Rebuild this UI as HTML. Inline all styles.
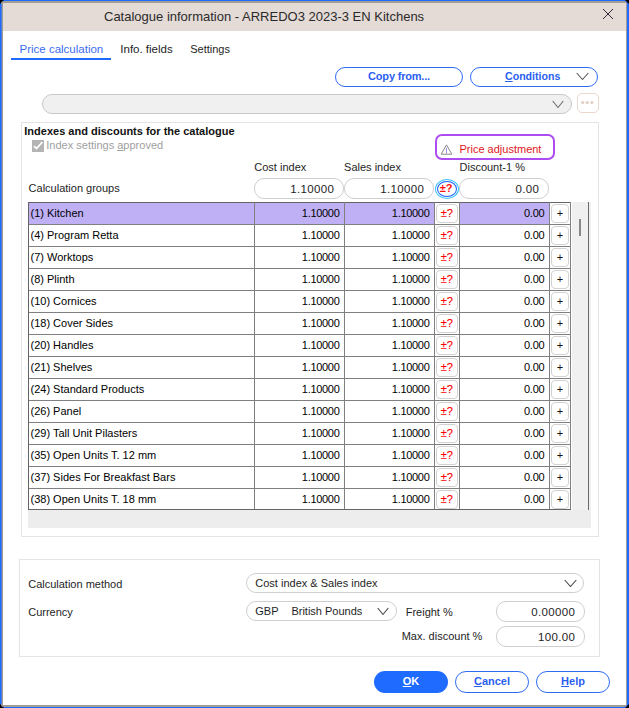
<!DOCTYPE html>
<html><head><meta charset="utf-8"><title>Catalogue information</title>
<style>
html,body{margin:0;padding:0;width:629px;height:708px;overflow:hidden;background:#000;}
body{position:relative;font-family:"Liberation Sans",sans-serif;}
.r{position:absolute;}
.t{position:absolute;white-space:nowrap;}
u{text-decoration:underline;text-underline-offset:1px;}
</style></head><body>
<div class="r" style="left:0px;top:0px;width:629px;height:708px;background:#1f6bff;clip-path:polygon(4px 0,625px 0,629px 4px,629px 704px,625px 708px,4px 708px,0 704px,0 4px);"></div>
<div class="r" style="left:1px;top:1px;width:626px;height:706px;background:#a19c96;border-radius:3px;"></div>
<div class="r" style="left:1px;top:4px;width:1px;height:700px;background:#4f7fd8;"></div>
<div class="r" style="left:3px;top:3px;width:623px;height:702px;background:#fff;"></div>
<div class="r" style="left:3px;top:3px;width:623px;height:28px;background:#e4dad6;"></div>
<div class="t" style="top:8.50px;font-size:13px;line-height:16px;color:#2a2a2a;left:104px;">Catalogue information - ARREDO3 2023-3 EN Kitchens</div>
<svg class="r" style="left:602px;top:8px" width="12" height="12" viewBox="0 0 12 12"><path d="M1 1 L11 11 M11 1 L1 11" stroke="#2a2030" stroke-width="0.95" fill="none"/></svg>
<div class="t" style="top:42.32px;font-size:11.5px;line-height:14px;color:#3b6cf0;left:19.5px;">Price calculation</div>
<div class="t" style="top:42.32px;font-size:11.5px;line-height:14px;color:#1e1e1e;left:120.3px;">Info. fields</div>
<div class="t" style="top:42.49px;font-size:11px;line-height:14px;color:#1e1e1e;left:190.2px;">Settings</div>
<div class="r" style="left:11px;top:58px;width:100px;height:2px;background:#1f6bff;"></div>
<div class="r" style="left:335px;top:67px;width:128px;height:20px;border:1px solid #2f6cf5;border-radius:10px;box-sizing:border-box;"></div>
<div class="t" style="top:69.19px;font-size:11px;line-height:14px;color:#2a5ff0;font-weight:700;letter-spacing:-0.2px;left:249px;width:300px;text-align:center;">Copy from...</div>
<div class="r" style="left:470px;top:67px;width:128px;height:20px;border:1px solid #2f6cf5;border-radius:10px;box-sizing:border-box;"></div>
<div class="t" style="top:69.83px;font-size:10.6px;line-height:13px;color:#2a5ff0;font-weight:700;left:505px;"><u>C</u>onditions</div>
<svg class="r" style="left:576px;top:72px" width="13" height="9" viewBox="0 0 13 9"><path d="M0.7 1 L6.5 7.5 L12.3 1" fill="none" stroke="#555" stroke-width="1.05"/></svg>
<div class="r" style="left:42px;top:94px;width:530px;height:20px;background:#f0f0f0;border:1px solid #c9c9c9;border-radius:10px;box-sizing:border-box;"></div>
<svg class="r" style="left:552px;top:100px" width="12" height="9" viewBox="0 0 12 9"><path d="M0.7 1 L6.0 7.5 L11.3 1" fill="none" stroke="#666" stroke-width="1.05"/></svg>
<div class="r" style="left:577px;top:93px;width:22px;height:20px;border:1px solid #ead8cc;border-radius:5px;box-sizing:border-box;"></div>
<svg class="r" style="left:577px;top:93px" width="22" height="20"><circle cx="5.7" cy="9.5" r="1.6" fill="#dfcfc4"/><circle cx="10.2" cy="9.5" r="1.6" fill="#dfcfc4"/><circle cx="14.9" cy="9.5" r="1.6" fill="#dfcfc4"/></svg>
<div class="r" style="left:21px;top:122px;width:578px;height:415px;border:1px solid #e4e4e4;box-sizing:border-box;"></div>
<div class="t" style="top:124.19px;font-size:11px;line-height:14px;color:#111;font-weight:700;left:24.3px;">Indexes and discounts for the catalogue</div>
<div class="r" style="left:32px;top:140px;width:12px;height:12px;background:#b4b4b4;"></div>
<svg class="r" style="left:32px;top:140px" width="12" height="12"><path d="M1.9 6.1 L4.5 8.5 L10.4 2" stroke="#fff" stroke-width="1.8" fill="none"/></svg>
<div class="t" style="top:138.19px;font-size:11px;line-height:14px;color:#a0a0a0;left:46.3px;">Index settings <u>a</u>pproved</div>
<div class="r" style="left:435px;top:134px;width:120px;height:26px;border:2px solid #ad4cf0;border-radius:7px;box-sizing:border-box;"></div>
<svg class="r" style="left:440px;top:144px" width="13" height="12"><path d="M6.5 0.9 L11.8 10.2 L1.2 10.2 Z" stroke="#7a7a7a" stroke-width="0.9" fill="none"/><path d="M6.5 3.8 L6.5 9.6" stroke="#8a7ce0" stroke-width="0.8"/></svg>
<div class="t" style="top:141.89px;font-size:11px;line-height:14px;color:#e0151b;left:459.5px;">Price adjustment</div>
<div class="t" style="top:160.19px;font-size:11px;line-height:14px;color:#1e1e1e;left:254.3px;">Cost index</div>
<div class="t" style="top:160.19px;font-size:11px;line-height:14px;color:#1e1e1e;left:344.1px;">Sales index</div>
<div class="t" style="top:159.89px;font-size:11px;line-height:14px;color:#1e1e1e;left:459.5px;">Discount-1 %</div>
<div class="t" style="top:180.99px;font-size:11px;line-height:14px;color:#1e1e1e;left:28.6px;">Calculation groups</div>
<div class="r" style="left:254px;top:178px;width:90px;height:21px;border:1px solid #cfcfcf;border-radius:10px;box-sizing:border-box;background:#fff;"></div>
<div class="t" style="top:182.22px;font-size:11.5px;line-height:14px;color:#1e1e1e;letter-spacing:0.35px;right:294.65px;">1.10000</div>
<div class="r" style="left:344px;top:178px;width:90px;height:21px;border:1px solid #cfcfcf;border-radius:10px;box-sizing:border-box;background:#fff;"></div>
<div class="t" style="top:182.22px;font-size:11.5px;line-height:14px;color:#1e1e1e;letter-spacing:0.35px;right:204.64999999999998px;">1.10000</div>
<div class="r" style="left:459px;top:178px;width:90px;height:21px;border:1px solid #cfcfcf;border-radius:10px;box-sizing:border-box;background:#fff;"></div>
<div class="t" style="top:182.22px;font-size:11.5px;line-height:14px;color:#1e1e1e;letter-spacing:0.35px;right:89.64999999999998px;">0.00</div>
<div class="r" style="left:435px;top:179px;width:24px;height:20px;border:1px solid #35c3ff;border-radius:50%;box-sizing:border-box;background:#fff;"></div>
<div class="r" style="left:437px;top:181px;width:20px;height:16px;border:1.3px solid #1a5cff;border-radius:50%;box-sizing:border-box;"></div>
<div class="t" style="top:180.89px;font-size:11px;line-height:14px;color:#ff1010;font-weight:700;left:296.2px;width:300px;text-align:center;">±?</div>
<div class="r" style="left:28px;top:510px;width:563px;height:18px;background:#ededed;"></div>
<div class="r" style="left:572px;top:202px;width:19px;height:308px;background:#f0f0f0;"></div>
<div class="r" style="left:588px;top:202px;width:1px;height:308px;background:#6a6a6a;"></div>
<div class="r" style="left:579px;top:219px;width:2px;height:17px;background:#888;"></div>
<div class="r" style="left:29px;top:203px;width:225px;height:21px;background:#bfb0f5;"></div>
<div class="r" style="left:255px;top:203px;width:89px;height:21px;background:#bfb0f5;"></div>
<div class="r" style="left:345px;top:203px;width:89px;height:21px;background:#bfb0f5;"></div>
<div class="r" style="left:460px;top:203px;width:89px;height:21px;background:#bfb0f5;"></div>
<div class="t" style="top:206.19px;font-size:11px;line-height:14px;color:#000;left:30.5px;">(1) Kitchen</div>
<div class="t" style="top:206.19px;font-size:11px;line-height:14px;color:#000;letter-spacing:-0.3px;right:289.5px;">1.10000</div>
<div class="t" style="top:206.19px;font-size:11px;line-height:14px;color:#000;letter-spacing:-0.3px;right:199.5px;">1.10000</div>
<div class="t" style="top:206.19px;font-size:11px;line-height:14px;color:#000;letter-spacing:-0.2px;right:84.5px;">0.00</div>
<div class="r" style="left:436px;top:204px;width:22px;height:19px;border:1px solid #d2d2d2;border-radius:4px;box-sizing:border-box;background:#fff;"></div>
<div class="t" style="top:206.19px;font-size:11px;line-height:14px;color:#ff0000;left:296.8px;width:300px;text-align:center;-webkit-text-stroke:0.12px #ff0000;">±?</div>
<div class="r" style="left:551px;top:204px;width:18px;height:19px;border:1px solid #d2d2d2;border-radius:4px;box-sizing:border-box;background:#fff;"></div>
<div class="t" style="top:205.69px;font-size:11px;line-height:14px;color:#111;left:410px;width:300px;text-align:center;">+</div>
<div class="r" style="left:29px;top:225px;width:225px;height:21px;background:#fff;"></div>
<div class="r" style="left:255px;top:225px;width:89px;height:21px;background:#fff;"></div>
<div class="r" style="left:345px;top:225px;width:89px;height:21px;background:#fff;"></div>
<div class="r" style="left:460px;top:225px;width:89px;height:21px;background:#fff;"></div>
<div class="t" style="top:228.19px;font-size:11px;line-height:14px;color:#000;left:30.5px;">(4) Program Retta</div>
<div class="t" style="top:228.19px;font-size:11px;line-height:14px;color:#000;letter-spacing:-0.3px;right:289.5px;">1.10000</div>
<div class="t" style="top:228.19px;font-size:11px;line-height:14px;color:#000;letter-spacing:-0.3px;right:199.5px;">1.10000</div>
<div class="t" style="top:228.19px;font-size:11px;line-height:14px;color:#000;letter-spacing:-0.2px;right:84.5px;">0.00</div>
<div class="r" style="left:436px;top:226px;width:22px;height:19px;border:1px solid #d2d2d2;border-radius:4px;box-sizing:border-box;background:#fff;"></div>
<div class="t" style="top:228.19px;font-size:11px;line-height:14px;color:#ff0000;left:296.8px;width:300px;text-align:center;-webkit-text-stroke:0.12px #ff0000;">±?</div>
<div class="r" style="left:551px;top:226px;width:18px;height:19px;border:1px solid #d2d2d2;border-radius:4px;box-sizing:border-box;background:#fff;"></div>
<div class="t" style="top:227.69px;font-size:11px;line-height:14px;color:#111;left:410px;width:300px;text-align:center;">+</div>
<div class="r" style="left:29px;top:247px;width:225px;height:21px;background:#fff;"></div>
<div class="r" style="left:255px;top:247px;width:89px;height:21px;background:#fff;"></div>
<div class="r" style="left:345px;top:247px;width:89px;height:21px;background:#fff;"></div>
<div class="r" style="left:460px;top:247px;width:89px;height:21px;background:#fff;"></div>
<div class="t" style="top:250.19px;font-size:11px;line-height:14px;color:#000;left:30.5px;">(7) Worktops</div>
<div class="t" style="top:250.19px;font-size:11px;line-height:14px;color:#000;letter-spacing:-0.3px;right:289.5px;">1.10000</div>
<div class="t" style="top:250.19px;font-size:11px;line-height:14px;color:#000;letter-spacing:-0.3px;right:199.5px;">1.10000</div>
<div class="t" style="top:250.19px;font-size:11px;line-height:14px;color:#000;letter-spacing:-0.2px;right:84.5px;">0.00</div>
<div class="r" style="left:436px;top:248px;width:22px;height:19px;border:1px solid #d2d2d2;border-radius:4px;box-sizing:border-box;background:#fff;"></div>
<div class="t" style="top:250.19px;font-size:11px;line-height:14px;color:#ff0000;left:296.8px;width:300px;text-align:center;-webkit-text-stroke:0.12px #ff0000;">±?</div>
<div class="r" style="left:551px;top:248px;width:18px;height:19px;border:1px solid #d2d2d2;border-radius:4px;box-sizing:border-box;background:#fff;"></div>
<div class="t" style="top:249.69px;font-size:11px;line-height:14px;color:#111;left:410px;width:300px;text-align:center;">+</div>
<div class="r" style="left:29px;top:269px;width:225px;height:21px;background:#fff;"></div>
<div class="r" style="left:255px;top:269px;width:89px;height:21px;background:#fff;"></div>
<div class="r" style="left:345px;top:269px;width:89px;height:21px;background:#fff;"></div>
<div class="r" style="left:460px;top:269px;width:89px;height:21px;background:#fff;"></div>
<div class="t" style="top:272.19px;font-size:11px;line-height:14px;color:#000;left:30.5px;">(8) Plinth</div>
<div class="t" style="top:272.19px;font-size:11px;line-height:14px;color:#000;letter-spacing:-0.3px;right:289.5px;">1.10000</div>
<div class="t" style="top:272.19px;font-size:11px;line-height:14px;color:#000;letter-spacing:-0.3px;right:199.5px;">1.10000</div>
<div class="t" style="top:272.19px;font-size:11px;line-height:14px;color:#000;letter-spacing:-0.2px;right:84.5px;">0.00</div>
<div class="r" style="left:436px;top:270px;width:22px;height:19px;border:1px solid #d2d2d2;border-radius:4px;box-sizing:border-box;background:#fff;"></div>
<div class="t" style="top:272.19px;font-size:11px;line-height:14px;color:#ff0000;left:296.8px;width:300px;text-align:center;-webkit-text-stroke:0.12px #ff0000;">±?</div>
<div class="r" style="left:551px;top:270px;width:18px;height:19px;border:1px solid #d2d2d2;border-radius:4px;box-sizing:border-box;background:#fff;"></div>
<div class="t" style="top:271.69px;font-size:11px;line-height:14px;color:#111;left:410px;width:300px;text-align:center;">+</div>
<div class="r" style="left:29px;top:291px;width:225px;height:21px;background:#fff;"></div>
<div class="r" style="left:255px;top:291px;width:89px;height:21px;background:#fff;"></div>
<div class="r" style="left:345px;top:291px;width:89px;height:21px;background:#fff;"></div>
<div class="r" style="left:460px;top:291px;width:89px;height:21px;background:#fff;"></div>
<div class="t" style="top:294.19px;font-size:11px;line-height:14px;color:#000;left:30.5px;">(10) Cornices</div>
<div class="t" style="top:294.19px;font-size:11px;line-height:14px;color:#000;letter-spacing:-0.3px;right:289.5px;">1.10000</div>
<div class="t" style="top:294.19px;font-size:11px;line-height:14px;color:#000;letter-spacing:-0.3px;right:199.5px;">1.10000</div>
<div class="t" style="top:294.19px;font-size:11px;line-height:14px;color:#000;letter-spacing:-0.2px;right:84.5px;">0.00</div>
<div class="r" style="left:436px;top:292px;width:22px;height:19px;border:1px solid #d2d2d2;border-radius:4px;box-sizing:border-box;background:#fff;"></div>
<div class="t" style="top:294.19px;font-size:11px;line-height:14px;color:#ff0000;left:296.8px;width:300px;text-align:center;-webkit-text-stroke:0.12px #ff0000;">±?</div>
<div class="r" style="left:551px;top:292px;width:18px;height:19px;border:1px solid #d2d2d2;border-radius:4px;box-sizing:border-box;background:#fff;"></div>
<div class="t" style="top:293.69px;font-size:11px;line-height:14px;color:#111;left:410px;width:300px;text-align:center;">+</div>
<div class="r" style="left:29px;top:313px;width:225px;height:21px;background:#fff;"></div>
<div class="r" style="left:255px;top:313px;width:89px;height:21px;background:#fff;"></div>
<div class="r" style="left:345px;top:313px;width:89px;height:21px;background:#fff;"></div>
<div class="r" style="left:460px;top:313px;width:89px;height:21px;background:#fff;"></div>
<div class="t" style="top:316.19px;font-size:11px;line-height:14px;color:#000;left:30.5px;">(18) Cover Sides</div>
<div class="t" style="top:316.19px;font-size:11px;line-height:14px;color:#000;letter-spacing:-0.3px;right:289.5px;">1.10000</div>
<div class="t" style="top:316.19px;font-size:11px;line-height:14px;color:#000;letter-spacing:-0.3px;right:199.5px;">1.10000</div>
<div class="t" style="top:316.19px;font-size:11px;line-height:14px;color:#000;letter-spacing:-0.2px;right:84.5px;">0.00</div>
<div class="r" style="left:436px;top:314px;width:22px;height:19px;border:1px solid #d2d2d2;border-radius:4px;box-sizing:border-box;background:#fff;"></div>
<div class="t" style="top:316.19px;font-size:11px;line-height:14px;color:#ff0000;left:296.8px;width:300px;text-align:center;-webkit-text-stroke:0.12px #ff0000;">±?</div>
<div class="r" style="left:551px;top:314px;width:18px;height:19px;border:1px solid #d2d2d2;border-radius:4px;box-sizing:border-box;background:#fff;"></div>
<div class="t" style="top:315.69px;font-size:11px;line-height:14px;color:#111;left:410px;width:300px;text-align:center;">+</div>
<div class="r" style="left:29px;top:335px;width:225px;height:21px;background:#fff;"></div>
<div class="r" style="left:255px;top:335px;width:89px;height:21px;background:#fff;"></div>
<div class="r" style="left:345px;top:335px;width:89px;height:21px;background:#fff;"></div>
<div class="r" style="left:460px;top:335px;width:89px;height:21px;background:#fff;"></div>
<div class="t" style="top:338.19px;font-size:11px;line-height:14px;color:#000;left:30.5px;">(20) Handles</div>
<div class="t" style="top:338.19px;font-size:11px;line-height:14px;color:#000;letter-spacing:-0.3px;right:289.5px;">1.10000</div>
<div class="t" style="top:338.19px;font-size:11px;line-height:14px;color:#000;letter-spacing:-0.3px;right:199.5px;">1.10000</div>
<div class="t" style="top:338.19px;font-size:11px;line-height:14px;color:#000;letter-spacing:-0.2px;right:84.5px;">0.00</div>
<div class="r" style="left:436px;top:336px;width:22px;height:19px;border:1px solid #d2d2d2;border-radius:4px;box-sizing:border-box;background:#fff;"></div>
<div class="t" style="top:338.19px;font-size:11px;line-height:14px;color:#ff0000;left:296.8px;width:300px;text-align:center;-webkit-text-stroke:0.12px #ff0000;">±?</div>
<div class="r" style="left:551px;top:336px;width:18px;height:19px;border:1px solid #d2d2d2;border-radius:4px;box-sizing:border-box;background:#fff;"></div>
<div class="t" style="top:337.69px;font-size:11px;line-height:14px;color:#111;left:410px;width:300px;text-align:center;">+</div>
<div class="r" style="left:29px;top:357px;width:225px;height:21px;background:#fff;"></div>
<div class="r" style="left:255px;top:357px;width:89px;height:21px;background:#fff;"></div>
<div class="r" style="left:345px;top:357px;width:89px;height:21px;background:#fff;"></div>
<div class="r" style="left:460px;top:357px;width:89px;height:21px;background:#fff;"></div>
<div class="t" style="top:360.19px;font-size:11px;line-height:14px;color:#000;left:30.5px;">(21) Shelves</div>
<div class="t" style="top:360.19px;font-size:11px;line-height:14px;color:#000;letter-spacing:-0.3px;right:289.5px;">1.10000</div>
<div class="t" style="top:360.19px;font-size:11px;line-height:14px;color:#000;letter-spacing:-0.3px;right:199.5px;">1.10000</div>
<div class="t" style="top:360.19px;font-size:11px;line-height:14px;color:#000;letter-spacing:-0.2px;right:84.5px;">0.00</div>
<div class="r" style="left:436px;top:358px;width:22px;height:19px;border:1px solid #d2d2d2;border-radius:4px;box-sizing:border-box;background:#fff;"></div>
<div class="t" style="top:360.19px;font-size:11px;line-height:14px;color:#ff0000;left:296.8px;width:300px;text-align:center;-webkit-text-stroke:0.12px #ff0000;">±?</div>
<div class="r" style="left:551px;top:358px;width:18px;height:19px;border:1px solid #d2d2d2;border-radius:4px;box-sizing:border-box;background:#fff;"></div>
<div class="t" style="top:359.69px;font-size:11px;line-height:14px;color:#111;left:410px;width:300px;text-align:center;">+</div>
<div class="r" style="left:29px;top:379px;width:225px;height:21px;background:#fff;"></div>
<div class="r" style="left:255px;top:379px;width:89px;height:21px;background:#fff;"></div>
<div class="r" style="left:345px;top:379px;width:89px;height:21px;background:#fff;"></div>
<div class="r" style="left:460px;top:379px;width:89px;height:21px;background:#fff;"></div>
<div class="t" style="top:382.19px;font-size:11px;line-height:14px;color:#000;left:30.5px;">(24) Standard Products</div>
<div class="t" style="top:382.19px;font-size:11px;line-height:14px;color:#000;letter-spacing:-0.3px;right:289.5px;">1.10000</div>
<div class="t" style="top:382.19px;font-size:11px;line-height:14px;color:#000;letter-spacing:-0.3px;right:199.5px;">1.10000</div>
<div class="t" style="top:382.19px;font-size:11px;line-height:14px;color:#000;letter-spacing:-0.2px;right:84.5px;">0.00</div>
<div class="r" style="left:436px;top:380px;width:22px;height:19px;border:1px solid #d2d2d2;border-radius:4px;box-sizing:border-box;background:#fff;"></div>
<div class="t" style="top:382.19px;font-size:11px;line-height:14px;color:#ff0000;left:296.8px;width:300px;text-align:center;-webkit-text-stroke:0.12px #ff0000;">±?</div>
<div class="r" style="left:551px;top:380px;width:18px;height:19px;border:1px solid #d2d2d2;border-radius:4px;box-sizing:border-box;background:#fff;"></div>
<div class="t" style="top:381.69px;font-size:11px;line-height:14px;color:#111;left:410px;width:300px;text-align:center;">+</div>
<div class="r" style="left:29px;top:401px;width:225px;height:21px;background:#fff;"></div>
<div class="r" style="left:255px;top:401px;width:89px;height:21px;background:#fff;"></div>
<div class="r" style="left:345px;top:401px;width:89px;height:21px;background:#fff;"></div>
<div class="r" style="left:460px;top:401px;width:89px;height:21px;background:#fff;"></div>
<div class="t" style="top:404.19px;font-size:11px;line-height:14px;color:#000;left:30.5px;">(26) Panel</div>
<div class="t" style="top:404.19px;font-size:11px;line-height:14px;color:#000;letter-spacing:-0.3px;right:289.5px;">1.10000</div>
<div class="t" style="top:404.19px;font-size:11px;line-height:14px;color:#000;letter-spacing:-0.3px;right:199.5px;">1.10000</div>
<div class="t" style="top:404.19px;font-size:11px;line-height:14px;color:#000;letter-spacing:-0.2px;right:84.5px;">0.00</div>
<div class="r" style="left:436px;top:402px;width:22px;height:19px;border:1px solid #d2d2d2;border-radius:4px;box-sizing:border-box;background:#fff;"></div>
<div class="t" style="top:404.19px;font-size:11px;line-height:14px;color:#ff0000;left:296.8px;width:300px;text-align:center;-webkit-text-stroke:0.12px #ff0000;">±?</div>
<div class="r" style="left:551px;top:402px;width:18px;height:19px;border:1px solid #d2d2d2;border-radius:4px;box-sizing:border-box;background:#fff;"></div>
<div class="t" style="top:403.69px;font-size:11px;line-height:14px;color:#111;left:410px;width:300px;text-align:center;">+</div>
<div class="r" style="left:29px;top:423px;width:225px;height:21px;background:#fff;"></div>
<div class="r" style="left:255px;top:423px;width:89px;height:21px;background:#fff;"></div>
<div class="r" style="left:345px;top:423px;width:89px;height:21px;background:#fff;"></div>
<div class="r" style="left:460px;top:423px;width:89px;height:21px;background:#fff;"></div>
<div class="t" style="top:426.19px;font-size:11px;line-height:14px;color:#000;left:30.5px;">(29) Tall Unit Pilasters</div>
<div class="t" style="top:426.19px;font-size:11px;line-height:14px;color:#000;letter-spacing:-0.3px;right:289.5px;">1.10000</div>
<div class="t" style="top:426.19px;font-size:11px;line-height:14px;color:#000;letter-spacing:-0.3px;right:199.5px;">1.10000</div>
<div class="t" style="top:426.19px;font-size:11px;line-height:14px;color:#000;letter-spacing:-0.2px;right:84.5px;">0.00</div>
<div class="r" style="left:436px;top:424px;width:22px;height:19px;border:1px solid #d2d2d2;border-radius:4px;box-sizing:border-box;background:#fff;"></div>
<div class="t" style="top:426.19px;font-size:11px;line-height:14px;color:#ff0000;left:296.8px;width:300px;text-align:center;-webkit-text-stroke:0.12px #ff0000;">±?</div>
<div class="r" style="left:551px;top:424px;width:18px;height:19px;border:1px solid #d2d2d2;border-radius:4px;box-sizing:border-box;background:#fff;"></div>
<div class="t" style="top:425.69px;font-size:11px;line-height:14px;color:#111;left:410px;width:300px;text-align:center;">+</div>
<div class="r" style="left:29px;top:445px;width:225px;height:21px;background:#fff;"></div>
<div class="r" style="left:255px;top:445px;width:89px;height:21px;background:#fff;"></div>
<div class="r" style="left:345px;top:445px;width:89px;height:21px;background:#fff;"></div>
<div class="r" style="left:460px;top:445px;width:89px;height:21px;background:#fff;"></div>
<div class="t" style="top:448.19px;font-size:11px;line-height:14px;color:#000;left:30.5px;">(35) Open Units T. 12 mm</div>
<div class="t" style="top:448.19px;font-size:11px;line-height:14px;color:#000;letter-spacing:-0.3px;right:289.5px;">1.10000</div>
<div class="t" style="top:448.19px;font-size:11px;line-height:14px;color:#000;letter-spacing:-0.3px;right:199.5px;">1.10000</div>
<div class="t" style="top:448.19px;font-size:11px;line-height:14px;color:#000;letter-spacing:-0.2px;right:84.5px;">0.00</div>
<div class="r" style="left:436px;top:446px;width:22px;height:19px;border:1px solid #d2d2d2;border-radius:4px;box-sizing:border-box;background:#fff;"></div>
<div class="t" style="top:448.19px;font-size:11px;line-height:14px;color:#ff0000;left:296.8px;width:300px;text-align:center;-webkit-text-stroke:0.12px #ff0000;">±?</div>
<div class="r" style="left:551px;top:446px;width:18px;height:19px;border:1px solid #d2d2d2;border-radius:4px;box-sizing:border-box;background:#fff;"></div>
<div class="t" style="top:447.69px;font-size:11px;line-height:14px;color:#111;left:410px;width:300px;text-align:center;">+</div>
<div class="r" style="left:29px;top:467px;width:225px;height:21px;background:#fff;"></div>
<div class="r" style="left:255px;top:467px;width:89px;height:21px;background:#fff;"></div>
<div class="r" style="left:345px;top:467px;width:89px;height:21px;background:#fff;"></div>
<div class="r" style="left:460px;top:467px;width:89px;height:21px;background:#fff;"></div>
<div class="t" style="top:470.19px;font-size:11px;line-height:14px;color:#000;left:30.5px;">(37) Sides For Breakfast Bars</div>
<div class="t" style="top:470.19px;font-size:11px;line-height:14px;color:#000;letter-spacing:-0.3px;right:289.5px;">1.10000</div>
<div class="t" style="top:470.19px;font-size:11px;line-height:14px;color:#000;letter-spacing:-0.3px;right:199.5px;">1.10000</div>
<div class="t" style="top:470.19px;font-size:11px;line-height:14px;color:#000;letter-spacing:-0.2px;right:84.5px;">0.00</div>
<div class="r" style="left:436px;top:468px;width:22px;height:19px;border:1px solid #d2d2d2;border-radius:4px;box-sizing:border-box;background:#fff;"></div>
<div class="t" style="top:470.19px;font-size:11px;line-height:14px;color:#ff0000;left:296.8px;width:300px;text-align:center;-webkit-text-stroke:0.12px #ff0000;">±?</div>
<div class="r" style="left:551px;top:468px;width:18px;height:19px;border:1px solid #d2d2d2;border-radius:4px;box-sizing:border-box;background:#fff;"></div>
<div class="t" style="top:469.69px;font-size:11px;line-height:14px;color:#111;left:410px;width:300px;text-align:center;">+</div>
<div class="r" style="left:29px;top:489px;width:225px;height:21px;background:#fff;"></div>
<div class="r" style="left:255px;top:489px;width:89px;height:21px;background:#fff;"></div>
<div class="r" style="left:345px;top:489px;width:89px;height:21px;background:#fff;"></div>
<div class="r" style="left:460px;top:489px;width:89px;height:21px;background:#fff;"></div>
<div class="t" style="top:492.19px;font-size:11px;line-height:14px;color:#000;left:30.5px;">(38) Open Units T. 18 mm</div>
<div class="t" style="top:492.19px;font-size:11px;line-height:14px;color:#000;letter-spacing:-0.3px;right:289.5px;">1.10000</div>
<div class="t" style="top:492.19px;font-size:11px;line-height:14px;color:#000;letter-spacing:-0.3px;right:199.5px;">1.10000</div>
<div class="t" style="top:492.19px;font-size:11px;line-height:14px;color:#000;letter-spacing:-0.2px;right:84.5px;">0.00</div>
<div class="r" style="left:436px;top:490px;width:22px;height:19px;border:1px solid #d2d2d2;border-radius:4px;box-sizing:border-box;background:#fff;"></div>
<div class="t" style="top:492.19px;font-size:11px;line-height:14px;color:#ff0000;left:296.8px;width:300px;text-align:center;-webkit-text-stroke:0.12px #ff0000;">±?</div>
<div class="r" style="left:551px;top:490px;width:18px;height:19px;border:1px solid #d2d2d2;border-radius:4px;box-sizing:border-box;background:#fff;"></div>
<div class="t" style="top:491.69px;font-size:11px;line-height:14px;color:#111;left:410px;width:300px;text-align:center;">+</div>
<div class="r" style="left:28px;top:202px;width:543px;height:1px;background:#808080;"></div>
<div class="r" style="left:28px;top:224px;width:543px;height:1px;background:#808080;"></div>
<div class="r" style="left:28px;top:246px;width:543px;height:1px;background:#808080;"></div>
<div class="r" style="left:28px;top:268px;width:543px;height:1px;background:#808080;"></div>
<div class="r" style="left:28px;top:290px;width:543px;height:1px;background:#808080;"></div>
<div class="r" style="left:28px;top:312px;width:543px;height:1px;background:#808080;"></div>
<div class="r" style="left:28px;top:334px;width:543px;height:1px;background:#808080;"></div>
<div class="r" style="left:28px;top:356px;width:543px;height:1px;background:#808080;"></div>
<div class="r" style="left:28px;top:378px;width:543px;height:1px;background:#808080;"></div>
<div class="r" style="left:28px;top:400px;width:543px;height:1px;background:#808080;"></div>
<div class="r" style="left:28px;top:422px;width:543px;height:1px;background:#808080;"></div>
<div class="r" style="left:28px;top:444px;width:543px;height:1px;background:#808080;"></div>
<div class="r" style="left:28px;top:466px;width:543px;height:1px;background:#808080;"></div>
<div class="r" style="left:28px;top:488px;width:543px;height:1px;background:#808080;"></div>
<div class="r" style="left:28px;top:202px;width:543px;height:1px;background:#646464;"></div>
<div class="r" style="left:28px;top:509px;width:543px;height:1px;background:#646464;"></div>
<div class="r" style="left:254px;top:202px;width:1px;height:307px;background:#808080;"></div>
<div class="r" style="left:344px;top:202px;width:1px;height:307px;background:#808080;"></div>
<div class="r" style="left:434px;top:202px;width:1px;height:307px;background:#808080;"></div>
<div class="r" style="left:459px;top:202px;width:1px;height:307px;background:#808080;"></div>
<div class="r" style="left:549px;top:202px;width:1px;height:307px;background:#808080;"></div>
<div class="r" style="left:570px;top:202px;width:1px;height:307px;background:#808080;"></div>
<div class="r" style="left:28px;top:202px;width:1px;height:308px;background:#646464;"></div>
<div class="r" style="left:19px;top:559px;width:581px;height:98px;border:1px solid #e4e4e4;box-sizing:border-box;"></div>
<div class="t" style="top:577.49px;font-size:11px;line-height:14px;color:#1e1e1e;left:28.2px;">Calculation method</div>
<div class="t" style="top:605.49px;font-size:11px;line-height:14px;color:#1e1e1e;left:28.2px;">Currency</div>
<div class="r" style="left:246px;top:573px;width:338px;height:20px;border:1px solid #cfcfcf;border-radius:10px;box-sizing:border-box;"></div>
<div class="t" style="top:576.49px;font-size:11px;line-height:14px;color:#1e1e1e;left:255.3px;">Cost index &amp; Sales index</div>
<svg class="r" style="left:564px;top:579px" width="13" height="9" viewBox="0 0 13 9"><path d="M0.7 1 L6.5 7.5 L12.3 1" fill="none" stroke="#444" stroke-width="1.1"/></svg>
<div class="r" style="left:246px;top:601px;width:151px;height:20px;border:1px solid #cfcfcf;border-radius:10px;box-sizing:border-box;"></div>
<div class="t" style="top:603.99px;font-size:11px;line-height:14px;color:#1e1e1e;left:255.3px;">GBP</div>
<div class="t" style="top:603.99px;font-size:11px;line-height:14px;color:#1e1e1e;left:291.4px;">British Pounds</div>
<svg class="r" style="left:377px;top:607px" width="12" height="9" viewBox="0 0 12 9"><path d="M0.7 1 L6.0 7.5 L11.3 1" fill="none" stroke="#444" stroke-width="1.1"/></svg>
<div class="t" style="top:604.99px;font-size:11px;line-height:14px;color:#1e1e1e;left:405.7px;">Freight %</div>
<div class="t" style="top:629.19px;font-size:11px;line-height:14px;color:#1e1e1e;left:401.7px;">Max. discount %</div>
<div class="r" style="left:496px;top:601px;width:89px;height:21px;border:1px solid #cfcfcf;border-radius:10px;box-sizing:border-box;"></div>
<div class="t" style="top:604.52px;font-size:11.5px;line-height:14px;color:#1e1e1e;letter-spacing:0.35px;right:53.64999999999998px;">0.00000</div>
<div class="r" style="left:496px;top:626px;width:89px;height:21px;border:1px solid #cfcfcf;border-radius:10px;box-sizing:border-box;"></div>
<div class="t" style="top:630.22px;font-size:11.5px;line-height:14px;color:#1e1e1e;letter-spacing:0.35px;right:53.64999999999998px;">100.00</div>
<div class="r" style="left:374px;top:671px;width:74px;height:22px;background:#1f6bff;border-radius:11px;"></div>
<div class="t" style="top:674.39px;font-size:11px;line-height:14px;color:#fff;font-weight:700;left:261px;width:300px;text-align:center;"><u>O</u>K</div>
<div class="r" style="left:455px;top:671px;width:74px;height:22px;border:1px solid #2f6cf5;border-radius:11px;box-sizing:border-box;"></div>
<div class="t" style="top:674.39px;font-size:11px;line-height:14px;color:#2a5ff0;font-weight:700;left:342px;width:300px;text-align:center;"><u>C</u>ancel</div>
<div class="r" style="left:536px;top:671px;width:74px;height:22px;border:1px solid #2f6cf5;border-radius:11px;box-sizing:border-box;"></div>
<div class="t" style="top:674.39px;font-size:11px;line-height:14px;color:#2a5ff0;font-weight:700;left:423px;width:300px;text-align:center;"><u>H</u>elp</div>
</body></html>
